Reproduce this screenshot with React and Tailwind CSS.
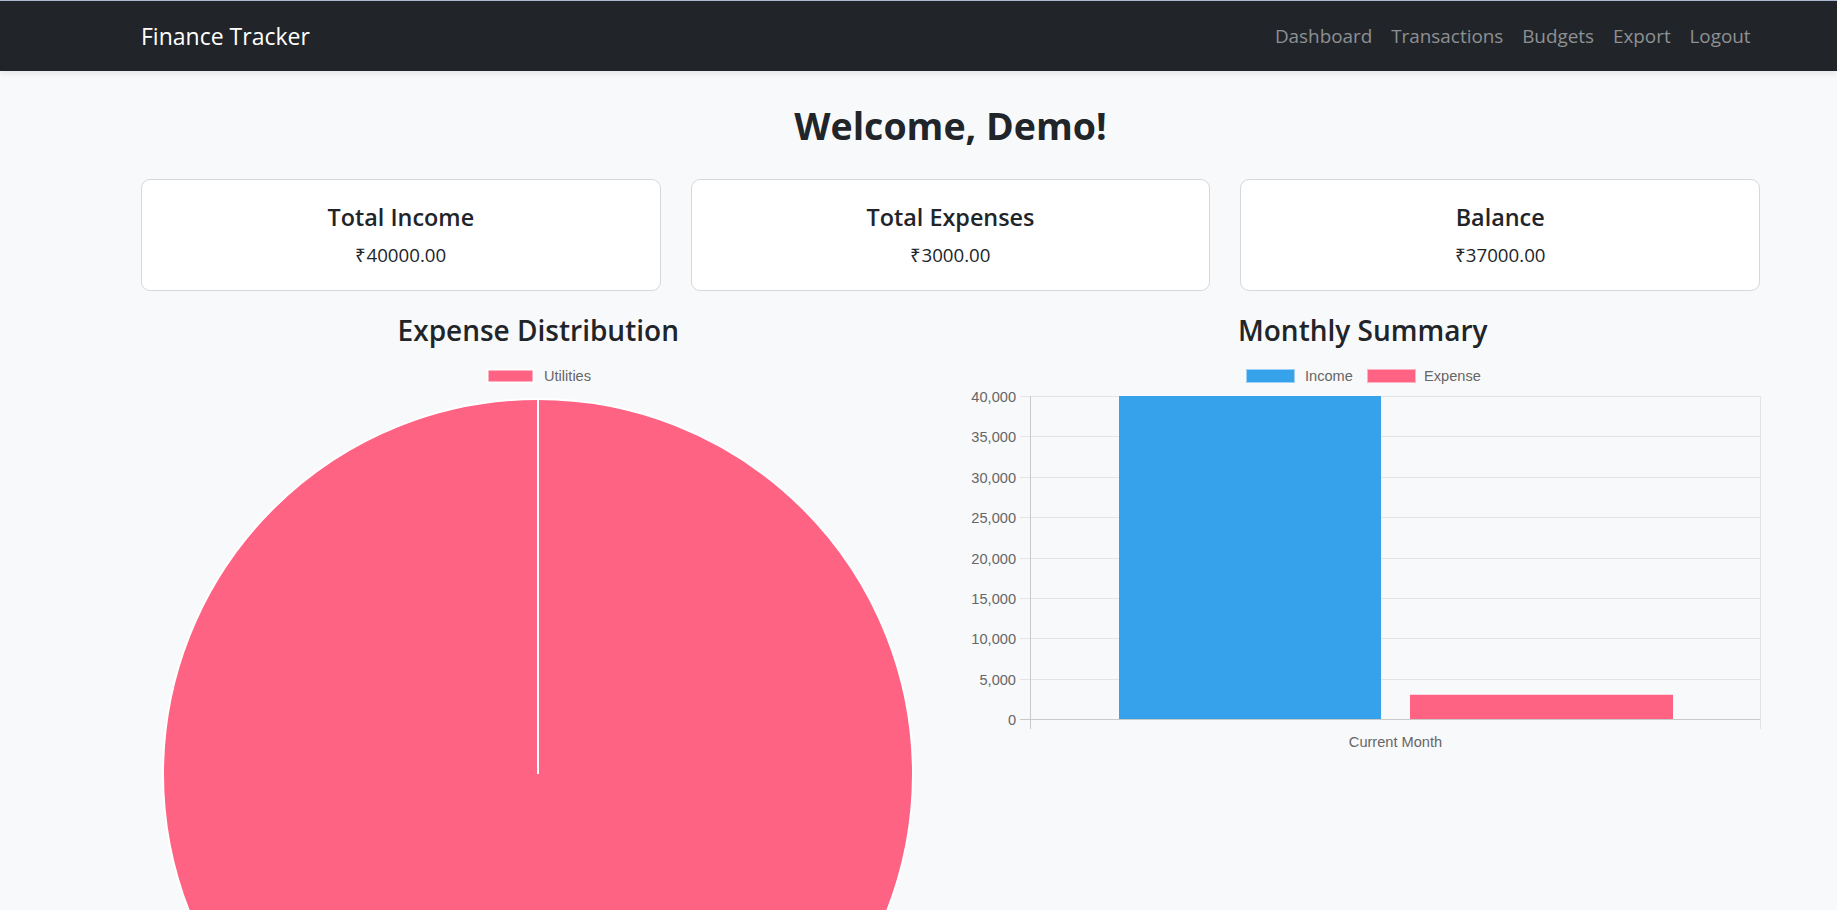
import React from "react";

const NAV_LINKS = ["Dashboard", "Transactions", "Budgets", "Export", "Logout"];

const SUMMARY = [
  { title: "Total Income", value: "₹40000.00" },
  { title: "Total Expenses", value: "₹3000.00" },
  { title: "Balance", value: "₹37000.00" },
];

const Y_TICKS = [40000, 35000, 30000, 25000, 20000, 15000, 10000, 5000, 0];

// chart geometry (px inside the svg)
const PLOT = { left: 64, right: 795, top: 40, bottom: 363 };
const yFor = (v) => PLOT.bottom - (v / 40000) * (PLOT.bottom - PLOT.top);
const CHART_FONT = "'Liberation Sans', Arial, sans-serif";

const PieChart = () => (
  <svg width="795" height="795" className="block">
    {/* legend */}
    <rect x="346.5" y="13.5" width="46" height="13" fill="#ff6384" stroke="#fff" strokeWidth="2" />
    <text x="403" y="25" fontSize="14.6" fill="#666" fontFamily={CHART_FONT}>
      Utilities
    </text>
    <circle cx="397" cy="418" r="375" fill="#ff6384" stroke="#fff" strokeWidth="2" />
    <line x1="397" y1="43" x2="397" y2="418" stroke="#fff" strokeWidth="2" />
  </svg>
);

const BarChart = () => (
  <svg width="795" height="400" className="block">
    {/* legend */}
    <rect x="280.5" y="13.5" width="48" height="13" fill="#36a2eb" stroke="#9fd0f5" strokeWidth="1" />
    <text x="339" y="25" fontSize="14.6" fill="#666" fontFamily={CHART_FONT}>Income</text>
    <rect x="401.5" y="13.5" width="48" height="13" fill="#ff6384" stroke="#ffb1c1" strokeWidth="1" />
    <text x="458" y="25" fontSize="14.6" fill="#666" fontFamily={CHART_FONT}>Expense</text>

    {/* grid */}
    {Y_TICKS.map((v) => {
      const y = Math.round(yFor(v)) + 0.5;
      return (
        <g key={v}>
          <line x1="54" x2={PLOT.right} y1={y} y2={y} stroke={v === 0 ? "#c9c9c9" : "#e3e4e5"} strokeWidth="1" />
          <text x="50" y={y + 5} fontSize="14.6" fill="#666" textAnchor="end" fontFamily={CHART_FONT}>
            {v.toLocaleString("en-US")}
          </text>
        </g>
      );
    })}
    <line x1={PLOT.left + 0.5} x2={PLOT.left + 0.5} y1={PLOT.top} y2={PLOT.bottom + 10} stroke="#c9c9c9" />
    <line x1={PLOT.right - 0.5} x2={PLOT.right - 0.5} y1={PLOT.top} y2={PLOT.bottom + 10} stroke="#e3e4e5" />

    {/* bars */}
    <rect x="153" y={yFor(40000)} width="262" height={yFor(0) - yFor(40000)} fill="#36a2eb" />
    <rect x="444" y={yFor(3000)} width="263" height={yFor(0) - yFor(3000)} fill="#ff6384" />

    <text x="429.5" y="391" fontSize="14.6" fill="#666" textAnchor="middle" fontFamily={CHART_FONT}>
      Current Month
    </text>
  </svg>
);

export default function App() {
  return (
    <div className="min-h-screen bg-[#f8f9fa] text-[#212529] font-['Open_Sans',sans-serif]">
      {/* Navbar */}
      <nav className="h-[71px] bg-[#212529] border-t border-[#aab9d1] shadow-[0_3px_6px_rgba(0,0,0,0.08)]">
        <div className="ml-[141px] w-[1619px] h-full flex items-center justify-between">
          <span className="text-[23px] text-white">Finance Tracker</span>
          <ul className="flex items-center">
            {NAV_LINKS.map((link) => (
              <li key={link} className="px-[9.4px] text-[18.9px] text-[#8e9093]">
                {link}
              </li>
            ))}
          </ul>
        </div>
      </nav>

      <div className="ml-[141px] w-[1619px] pt-[27px]">
        <h1 className="text-center text-[37.5px] font-bold leading-[56px]">Welcome, Demo!</h1>

        {/* Summary cards */}
        <div className="grid grid-cols-3 gap-[30px] mt-[25px]">
          {SUMMARY.map((item) => (
            <div
              key={item.title}
              className="h-[112px] bg-white border border-[#d6d8db] rounded-[9px] flex flex-col items-center justify-center"
            >
              <h5 className="text-[23.4px] font-semibold leading-[28px] translate-y-[1px]">{item.title}</h5>
              <p className="mt-[12px] text-[18.7px] leading-[26px]">{item.value}</p>
            </div>
          ))}
        </div>

        {/* Charts */}
        <div className="grid grid-cols-2 gap-[30px] mt-[19px]">
          <div>
            <h3 className="text-center text-[28px] font-semibold leading-[40px] mb-[6px]">
              Expense Distribution
            </h3>
            <PieChart />
          </div>
          <div>
            <h3 className="text-center text-[28px] font-semibold leading-[40px] mb-[6px]">
              Monthly Summary
            </h3>
            <BarChart />
          </div>
        </div>
      </div>
    </div>
  );
}
